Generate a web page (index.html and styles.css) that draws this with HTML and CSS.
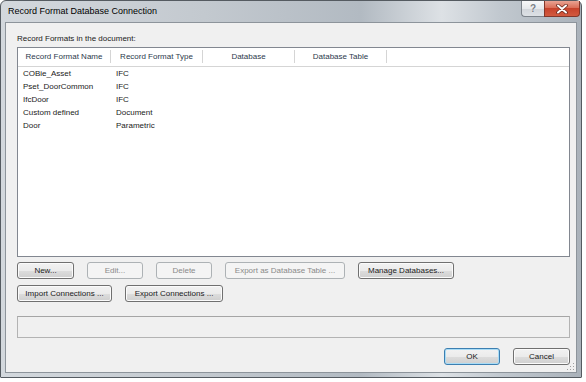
FILE: index.html
```html
<!DOCTYPE html>
<html lang="en">
<head>
  <meta charset="UTF-8" />
  <meta name="viewport" content="width=device-width, initial-scale=1.0"/>
  <title>Record Format Database Connection</title>
  <link rel="stylesheet" href="styles.css">
</head>
<body>

<div class="window">
  <div class="titlebar">
    <span class="title">Record Format Database Connection</span>
    <div class="caption-btns">
      <span class="cap help">?</span>
      <span class="cap close">
        <svg width="12" height="10" viewBox="0 0 12 10">
          <path d="M2 1.5 L10 8.5 M10 1.5 L2 8.5" stroke="#6b2a1f" stroke-width="3.6" stroke-linecap="round" fill="none"/>
          <path d="M2 1.5 L10 8.5 M10 1.5 L2 8.5" stroke="#ffffff" stroke-width="2" stroke-linecap="round" fill="none"/>
        </svg>
      </span>
    </div>
  </div>

  <div class="client">
    <div class="label">Record Formats in the document:</div>

    <div class="list">
      <div class="list-head">
        <div class="col">Record Format Name</div>
        <div class="col">Record Format Type</div>
        <div class="col">Database</div>
        <div class="col">Database Table</div>
      </div>
      <div class="list-row"><div class="cell">COBie_Asset</div><div class="cell">IFC</div></div>
      <div class="list-row"><div class="cell">Pset_DoorCommon</div><div class="cell">IFC</div></div>
      <div class="list-row"><div class="cell">IfcDoor</div><div class="cell">IFC</div></div>
      <div class="list-row"><div class="cell">Custom defined</div><div class="cell">Document</div></div>
      <div class="list-row"><div class="cell">Door</div><div class="cell">Parametric</div></div>
    </div>

    <div class="btn-row row-one">
      <button class="btn btn-new">New...</button>
      <button class="btn btn-small" disabled>Edit...</button>
      <button class="btn btn-small" disabled>Delete</button>
      <button class="btn btn-export-table" disabled>Export as Database Table ...</button>
      <button class="btn btn-manage">Manage Databases...</button>
    </div>

    <div class="btn-row row-two">
      <button class="btn btn-import">Import Connections ...</button>
      <button class="btn btn-export">Export Connections ...</button>
    </div>

    <div class="status"></div>

    <div class="btn-row dialog-btns">
      <button class="btn btn-small default">OK</button>
      <button class="btn btn-cancel">Cancel</button>
    </div>

    <svg class="grip" width="8" height="8" viewBox="0 0 8 8">
      <rect x="6" y="0" width="1" height="1" fill="#a0a0a0"/>
      <rect x="6" y="3" width="1" height="1" fill="#a0a0a0"/>
      <rect x="3" y="3" width="1" height="1" fill="#a0a0a0"/>
      <rect x="6" y="6" width="1" height="1" fill="#a0a0a0"/>
      <rect x="3" y="6" width="1" height="1" fill="#a0a0a0"/>
      <rect x="0" y="6" width="1" height="1" fill="#a0a0a0"/>
    </svg>
  </div>
</div>

</body>
</html>
```

FILE: styles.css
```css
body { margin: 0; background: #ffffff; font-family: "Liberation Sans", Arial, sans-serif; font-size: 8px; color: #1a1a1a; }

.window { width: 582px; height: 378px; box-sizing: border-box; border: 1px solid #555b61; border-radius: 6px 6px 1px 1px; display: flex; flex-direction: column;
  background: linear-gradient(to right, #d3d8dd 0%, #c3c9cf 35%, #b2bac2 62%, #dde1e5 76%, #c1c8cf 86%, #aab2ba 100%); }

.titlebar { height: 21px; display: flex; align-items: flex-start; flex-shrink: 0; }
.title { font-size: 9px; line-height: 21px; padding-left: 7px; color: #000; }
.caption-btns { margin-left: auto; margin-right: 1px; display: flex; }
.cap { height: 16px; box-sizing: border-box; display: flex; align-items: center; justify-content: center; border: 1px solid #7d848c; border-top: none; }
.help { width: 23px; border-right: none; border-radius: 0 0 0 4px; background: linear-gradient(#f7f8f9, #e6e9ec 50%, #d2d6db 51%, #dde1e5); color: #7a7f86; font-weight: bold; font-size: 10px; text-shadow: 0 0 1px #fff; }
.close { width: 36px; border-color: #83372a; border-radius: 0 0 4px 0; background: linear-gradient(#e9a393, #da6f59 45%, #c7432c 50%, #d25a3f); }

.client { flex: 1; margin: 0 4px 4px; border: 1px solid #8d949b; background: #f0f0f0; padding: 9px 0 0 11px; position: relative; }

.label { line-height: 13px; margin-bottom: 2px; }

.list { width: 553px; height: 210px; box-sizing: border-box; border: 1px solid #828790; background: #fff; }
.list-head { display: flex; height: 18px; border-bottom: 1px solid #d5d5d5; }
.list-head .col { width: 91px; height: 13px; margin-top: 2px; line-height: 13px; text-align: center; color: #2c3a4c; border-right: 1px solid #d5d5d5; }
.list-head .col:first-child { width: 92px; }
.list-row { display: flex; height: 13px; line-height: 13px; }
.list-row .cell { width: 88px; padding-left: 5px; }

.btn-row { display: flex; gap: 13px; }
.row-one { margin-top: 5px; }
.row-two { margin-top: 6px; }
.dialog-btns { margin-top: 10px; width: 553px; justify-content: flex-end; }

.btn { height: 17px; padding: 0; font-family: inherit; font-size: 8px; color: #1a1a1a; border: 1px solid #707070; border-radius: 3px;
  background: linear-gradient(#f2f2f2 0%, #ebebeb 50%, #dddddd 51%, #cfcfcf 100%); box-shadow: inset 0 0 0 1px #fbfbfb; }
.btn:disabled { color: #8a8a8a; border-color: #adb2b5; background: #f4f4f4; box-shadow: none; }
.btn.default { border-color: #3c7fb1; box-shadow: inset 0 0 0 1px #a9dcf6; }

.btn-new { width: 57px; }
.btn-small { width: 56px; }
.btn-export-table { width: 120px; }
.btn-manage { width: 96px; }
.btn-import { width: 95px; }
.btn-export { width: 98px; }
.btn-cancel { width: 57px; }

.status { margin-top: 14px; width: 553px; height: 22px; box-sizing: border-box; border: 1px solid #b3b3b3; border-top-color: #a5a5a5; }

.grip { position: absolute; right: 1px; bottom: 1px; }
```
